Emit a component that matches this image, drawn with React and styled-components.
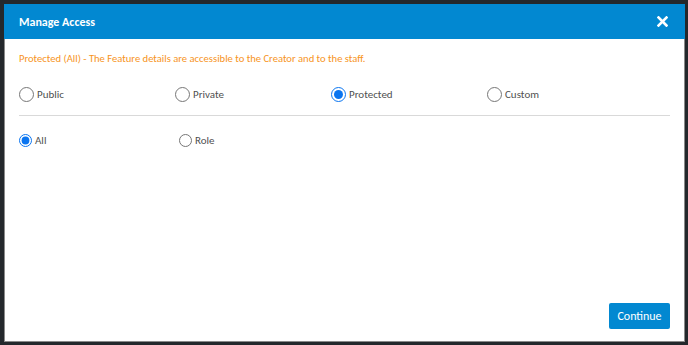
import React from 'react';
import styled, { createGlobalStyle } from 'styled-components';

const GlobalStyle = createGlobalStyle`
    html, body {
        margin: 0;
        padding: 0;
        background: #24282c;
        font-family: Carlito, "Open Sans", sans-serif;
    }
`;

const Backdrop = styled.div`
    width: 688px;
    height: 345px;
    box-sizing: border-box;
    padding: 4px 3px 3px 4px;
    display: flex;
`;

const Modal = styled.div`
    flex: 1;
    display: flex;
    flex-flow: column nowrap;
    background: #fff;
    border: 1px solid #8a8a8a;
    border-top: none;
`;

const Header = styled.div`
    height: 35px;
    flex: 0 0 auto;
    display: flex;
    align-items: center;
    justify-content: space-between;
    background: #0288d1;
    margin: 0 -1px;
    padding: 0 17px 0 15px;
`;

const Title = styled.h4`
    margin: 0;
    color: #fff;
    font-size: 12px;
    font-weight: 700;
`;

const Close = styled.button`
    border: none;
    background: none;
    padding: 0;
    display: flex;
    cursor: pointer;
`;

const Body = styled.div`
    flex: 1;
    display: flex;
    flex-flow: column nowrap;
    padding: 12px 14px 12px 14px;
`;

const Notice = styled.p`
    margin: 0;
    color: #f7941d;
    font-size: 10.6px;
    line-height: 16px;
`;

const Options = styled.div`
    display: grid;
    grid-template-columns: repeat(4, 156px);
    padding: 20px 0 13px;
    border-bottom: 1px solid #d9d9d9;
`;

const SubOptions = styled.div`
    display: grid;
    grid-template-columns: repeat(2, 160px);
    padding: 18px 0 0;
`;

const Option = styled.label`
    display: flex;
    align-items: center;
    color: #505050;
    font-size: 11px;
    cursor: pointer;
`;

const Radio = styled.input.attrs({ type: 'radio' })`
    margin: 0 3px 0 0;
    width: ${(p) => p.$size}px;
    height: ${(p) => p.$size}px;
    accent-color: #0a75f0;
`;

const Footer = styled.div`
    margin-top: auto;
    display: flex;
    justify-content: flex-end;
`;

const Button = styled.button`
    background: #0288d1;
    color: #fff;
    border: none;
    border-radius: 2px;
    font-family: inherit;
    font-size: 12px;
    width: 61px;
    height: 26px;
    padding: 0;
    cursor: pointer;
`;

const access = ['Public', 'Private', 'Protected', 'Custom'];
const scopes = ['All', 'Role'];

const App = () => {
    const [mode, setMode] = React.useState('Protected');
    const [scope, setScope] = React.useState('All');

    return (<>
        <GlobalStyle />
        <Backdrop>
            <Modal>
                <Header>
                    <Title>Manage Access</Title>
                    <Close aria-label="close">
                        <svg width="11" height="11" viewBox="0 0 11 11">
                            <path d="M1.5 1.5 L9.5 9.5 M9.5 1.5 L1.5 9.5" stroke="#fff" strokeWidth="2.6" strokeLinecap="square" />
                        </svg>
                    </Close>
                </Header>
                <Body>
                    <Notice>Protected (All) - The Feature details are accessible to the Creator and to the staff.</Notice>
                    <Options>
                        {access.map((a) => (
                            <Option key={a}>
                                <Radio $size={15} name="access" checked={mode === a} onChange={() => setMode(a)} />
                                {a}
                            </Option>
                        ))}
                    </Options>
                    <SubOptions>
                        {scopes.map((s) => (
                            <Option key={s}>
                                <Radio $size={13} name="scope" checked={scope === s} onChange={() => setScope(s)} />
                                {s}
                            </Option>
                        ))}
                    </SubOptions>
                    <Footer>
                        <Button>Continue</Button>
                    </Footer>
                </Body>
            </Modal>
        </Backdrop>
    </>);
}

export default App;
